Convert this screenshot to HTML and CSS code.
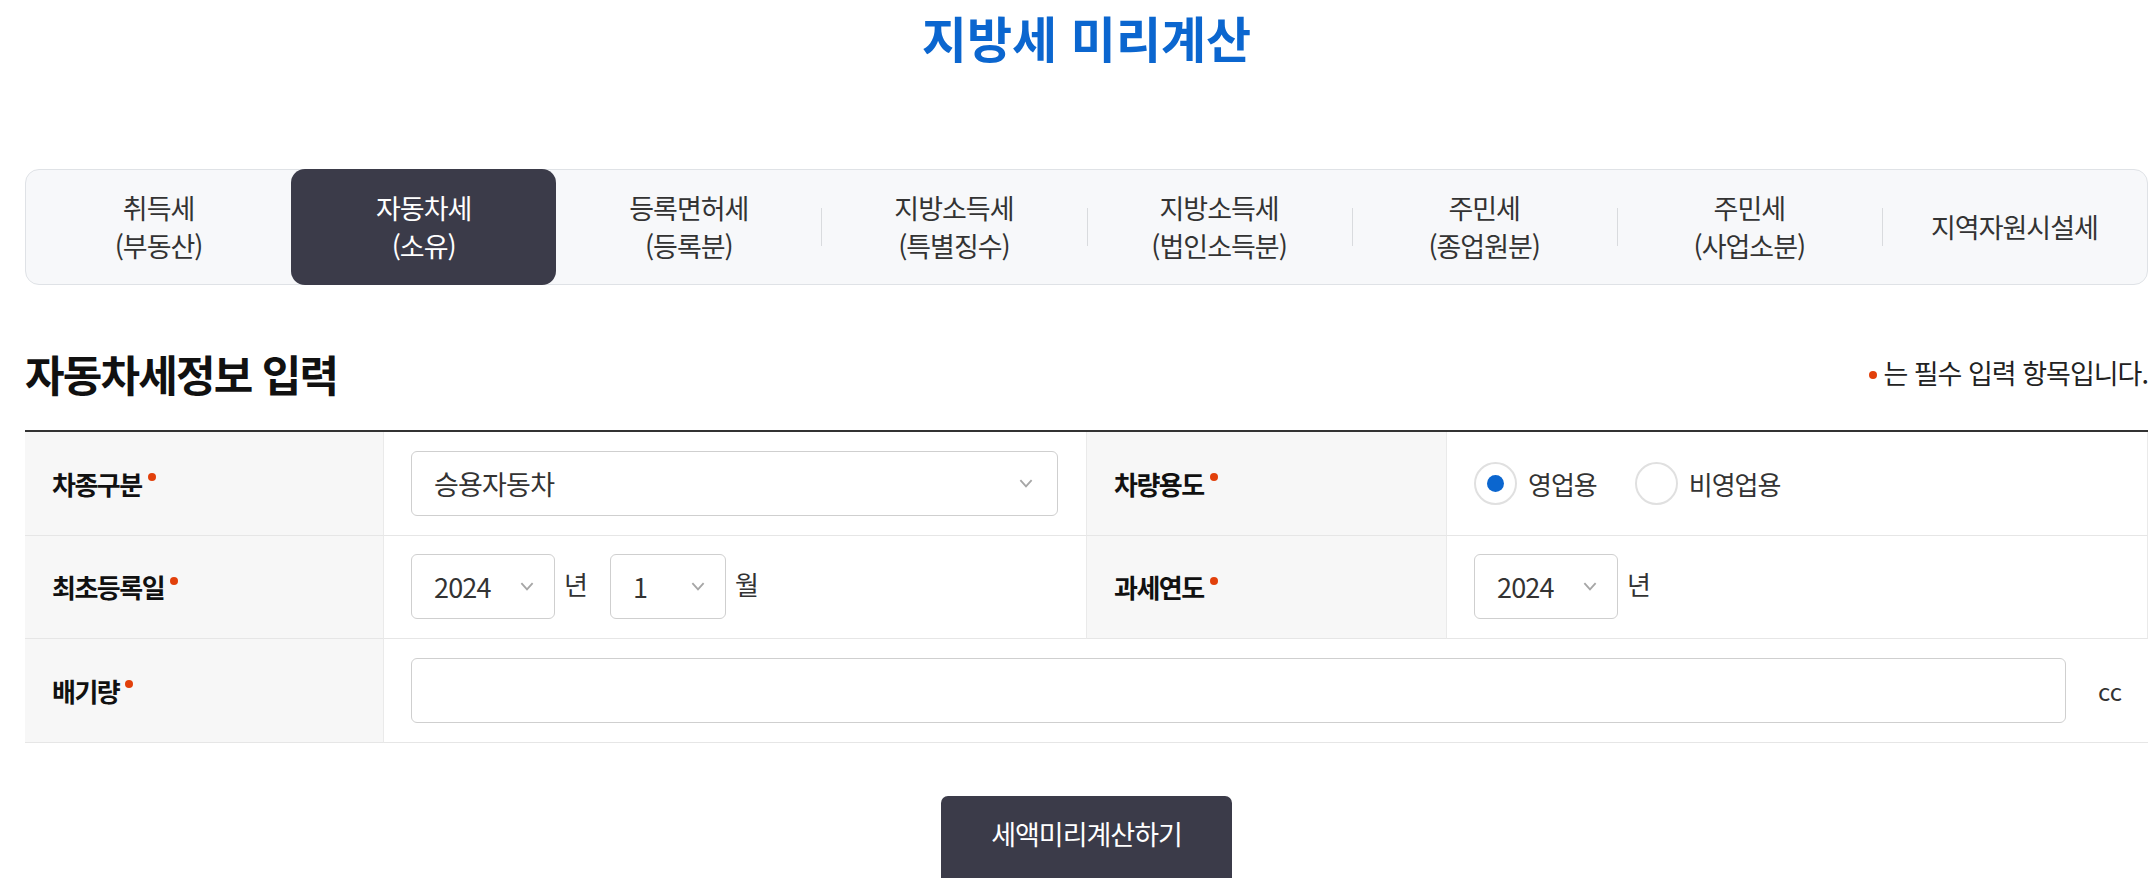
FILE: index.html
```html
<!DOCTYPE html>
<html lang="ko">
<head>
<meta charset="utf-8">
<title>지방세 미리계산</title>
<link rel="stylesheet" href="styles.css">
</head>
<body>
<div class="page">
  <h1 class="title">지방세 미리계산</h1>

  <nav class="tabs">
    <div class="tab"><span>취득세</span><span>(부동산)</span></div>
    <div class="tab active"><span>자동차세</span><span>(소유)</span></div>
    <div class="tab"><span>등록면허세</span><span>(등록분)</span></div>
    <div class="tab sep"><span>지방소득세</span><span>(특별징수)</span></div>
    <div class="tab sep"><span>지방소득세</span><span>(법인소득분)</span></div>
    <div class="tab sep"><span>주민세</span><span>(종업원분)</span></div>
    <div class="tab sep"><span>주민세</span><span>(사업소분)</span></div>
    <div class="tab sep"><span>지역자원시설세</span></div>
  </nav>

  <div class="section-head">
    <h2 class="section-title">자동차세정보 입력</h2>
    <p class="req-note"><i class="dot"></i>는 필수 입력 항목입니다.</p>
  </div>

  <div class="form-table">
    <div class="th">차종구분<i class="dot"></i></div>
    <div class="td">
      <div class="select wide"><span>승용자동차</span><svg class="chev" viewBox="0 0 12 8"><polyline points="1,1 6,6.5 11,1"/></svg></div>
    </div>
    <div class="th">차량용도<i class="dot"></i></div>
    <div class="td">
      <label class="radio"><span class="circle on"></span>영업용</label>
      <label class="radio"><span class="circle"></span>비영업용</label>
    </div>

    <div class="th">최초등록일<i class="dot"></i></div>
    <div class="td">
      <div class="select year"><span>2024</span><svg class="chev" viewBox="0 0 12 8"><polyline points="1,1 6,6.5 11,1"/></svg></div>
      <span class="unit">년</span>
      <div class="select month"><span>1</span><svg class="chev" viewBox="0 0 12 8"><polyline points="1,1 6,6.5 11,1"/></svg></div>
      <span class="unit">월</span>
    </div>
    <div class="th">과세연도<i class="dot"></i></div>
    <div class="td">
      <div class="select year"><span>2024</span><svg class="chev" viewBox="0 0 12 8"><polyline points="1,1 6,6.5 11,1"/></svg></div>
      <span class="unit">년</span>
    </div>

    <div class="th">배기량<i class="dot"></i></div>
    <div class="td span3">
      <div class="input"></div>
      <span class="cc">cc</span>
    </div>
  </div>

  <div class="actions">
    <button class="btn-calc" type="button">세액미리계산하기</button>
  </div>
</div>
</body>
</html>
```

FILE: styles.css
```css
* { box-sizing: border-box; }
html, body { margin: 0; padding: 0; background: #fff; }
body {
  font-family: "Noto Sans CJK KR", "Noto Sans", sans-serif;
  color: #222;
  overflow: hidden;
}
.page {
  padding: 0 2px 0 25px;
}
.title {
  margin: 0;
  height: 169px;
  padding-top: 4px;
  text-align: center;
  font-size: 49px;
  font-weight: 700;
  line-height: 66px;
  color: #0b66cf;
}
.tabs {
  display: grid;
  grid-template-columns: repeat(8, 1fr);
  height: 116px;
  border: 1px solid #dfe2e6;
  border-radius: 14px;
  background: #f7f8fa;
}
.tab {
  position: relative;
  display: flex;
  flex-direction: column;
  align-items: center;
  justify-content: center;
  font-size: 27px;
  letter-spacing: -1px;
  line-height: 38px;
  color: #333;
  margin: -1px 0;
}
.tab.active {
  background: #3b3b49;
  color: #fff;
  border-radius: 14px;
}
.tab.sep::before {
  content: "";
  position: absolute;
  left: 0;
  top: 50%;
  height: 38px;
  margin-top: -19px;
  border-left: 1px solid #d9dbde;
}
.section-head {
  display: flex;
  align-items: center;
  justify-content: space-between;
  height: 145px;
  padding-top: 30px;
}
.section-title {
  margin: 0;
  font-size: 43px;
  font-weight: 700;
  line-height: 56px;
  color: #111;
  letter-spacing: -1.8px;
}
.req-note {
  margin: 0;
  font-size: 27px;
  letter-spacing: -1px;
  color: #222;
  display: flex;
  align-items: center;
}
.dot {
  display: inline-block;
  width: 8px;
  height: 8px;
  border-radius: 50%;
  background: #e2400b;
}
.req-note .dot { margin-right: 6px; margin-top: 4px; }
.form-table {
  display: grid;
  grid-template-columns: 359px 703px 360px 1fr;
  border-top: 2px solid #333;
}
.th, .td {
  height: 103.5px;
  border-bottom: 1px solid #e6e6e6;
  display: flex;
  align-items: center;
}
.th {
  background: #f7f7f7;
  padding-left: 27px;
  font-size: 26px;
  letter-spacing: -1.5px;
  font-weight: 700;
  color: #111;
  border-right: 1px solid #eaeaea;
}
.th .dot { margin-left: 6px; margin-top: -12px; }
.td {
  padding-left: 27px;
  border-right: 1px solid #eaeaea;
}
.td:last-child, .td.span3 { border-right: 0; }
.span3 { grid-column: span 3; }
.select {
  display: flex;
  align-items: center;
  justify-content: space-between;
  height: 65px;
  border: 1px solid #cfcfcf;
  border-radius: 6px;
  background: #fff;
  padding: 0 24px 0 22px;
  font-size: 27px;
  letter-spacing: -0.8px;
  color: #333;
}
.select.wide { width: 647px; }
.select.year { width: 144px; padding-right: 20px; }
.select.month { width: 116px; padding-right: 20px; }
.chev {
  width: 14px;
  height: 9px;
  fill: none;
  stroke: #a6a6a6;
  stroke-width: 1.6;
}
.unit {
  font-size: 26px;
  color: #333;
  margin: -6px 22px 0 9px;
}
.radio {
  display: flex;
  align-items: center;
  font-size: 26px;
  letter-spacing: -1px;
  color: #333;
  margin-right: 38px;
}
.circle {
  width: 43px;
  height: 43px;
  border-radius: 50%;
  border: 2px solid #e0e0e0;
  background: #fff;
  margin-right: 11px;
  display: flex;
  align-items: center;
  justify-content: center;
}
.circle.on::after {
  content: "";
  width: 17px;
  height: 17px;
  border-radius: 50%;
  background: #0b66cf;
}
.input {
  width: 1655px;
  height: 65px;
  border: 1px solid #cfcfcf;
  border-radius: 6px;
  background: #fff;
}
.cc {
  font-size: 24px;
  color: #333;
  margin-left: 32px;
}
.actions {
  display: flex;
  justify-content: center;
  padding-top: 53px;
}
.btn-calc {
  width: 291px;
  height: 90px;
  border: 0;
  border-radius: 7px;
  background: #3b3b49;
  color: #fff;
  font-family: inherit;
  font-size: 27px;
  letter-spacing: -1px;
  padding-bottom: 15px;
}
```
